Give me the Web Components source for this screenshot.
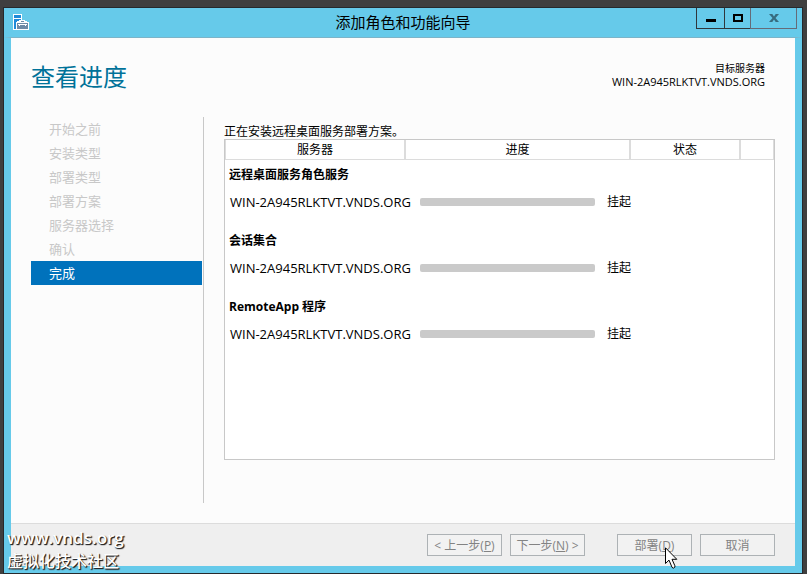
<!DOCTYPE html>
<html lang="zh-CN">
<head>
<meta charset="utf-8">
<meta name="viewport" content="width=device-width, initial-scale=1">
<title>添加角色和功能向导</title>
<style>
  body {
    margin: 0;
    font-family: "Open Sans", "Noto Sans CJK SC", sans-serif;
    font-size: 12px;
    color: #000;
    background-color: #3f3f3f;
  }
</style>
</head>
<body>
<wizard-window titlename="添加角色和功能向导">
  <wizard-header slot="header" titlename="查看进度" label="目标服务器" server="WIN-2A945RLKTVT.VNDS.ORG"></wizard-header>

  <wizard-steps slot="steps">
    <wizard-step>开始之前</wizard-step>
    <wizard-step>安装类型</wizard-step>
    <wizard-step>部署类型</wizard-step>
    <wizard-step>部署方案</wizard-step>
    <wizard-step>服务器选择</wizard-step>
    <wizard-step>确认</wizard-step>
    <wizard-step current>完成</wizard-step>
  </wizard-steps>

  <deploy-progress>正在安装远程桌面服务部署方案。</deploy-progress>

  <wizard-actions slot="actions">
    <wizard-button>&lt; 上一步(<u>P</u>)</wizard-button>
    <wizard-button>下一步(<u>N</u>) &gt;</wizard-button>
    <wizard-button slot="finish" pointed>部署(<u>D</u>)</wizard-button>
    <wizard-button slot="finish">取消</wizard-button>
  </wizard-actions>
</wizard-window>
<site-mark url="www.vnds.org" name="虚拟化技术社区"></site-mark>

<script>
class BaseElement extends HTMLElement {
  constructor() {
    super();
    this.attachShadow({ mode: 'open' });
  }

  connectedCallback() {
    const template = document.createElement('template');
    template.innerHTML = `${this.getStyle()}${this.getTemplate()}`;
    this.shadowRoot.replaceChildren(template.content.cloneNode(true));
  }
}

class WizardWindow extends BaseElement {
  getTemplate() {
    return `
      <div class="title-bar">
        <svg class="app-icon" viewBox="0 0 16 16" width="16" height="16" shape-rendering="crispEdges">
          <path fill="#fff" d="M0 0h9v6h3v1h2v1h2v8H0z"/>
          <path fill="#1f8ad8" d="M1 1h7v3H1zM1 5h7v1H6v1H4v1H3v7H1z"/>
          <path fill="#6f8ba6" d="M8 7h3v1H8zM4 9h11v6H4z"/>
          <path fill="#fff" d="M5 10h9v1H5zM6 11h1v1H6zM12 11h1v1h-1z"/>
          <path fill="#66caea" d="M9 0h7v6H9zM13 6h3v1h-3z"/>
        </svg>
        <h1>${this.getAttribute('titlename')}</h1>
        <div class="controls">
          <button aria-label="最小化"><svg viewBox="0 0 10 10" width="10" height="10"><path d="M0 6h10v3H0z"/></svg></button>
          <button class="maximize" aria-label="最大化"><svg viewBox="0 0 10 8" width="10" height="8"><path fill-rule="evenodd" d="M0 0h10v8H0zM2 2v4h6V2z"/></svg></button>
          <button class="close" aria-label="关闭"><svg viewBox="0 0 10 8" width="10" height="8"><path d="M0 0h3.3L5 2.4 6.700 0H10L6.500 4 10 8H6.700L5 5.600 3.300 8H0L3.500 4z"/></svg></button>
        </div>
      </div>
      <main>
        <slot name="header"></slot>
        <div class="content">
          <slot name="steps"></slot>
          <slot></slot>
        </div>
        <slot name="actions"></slot>
      </main>
    `;
  }

  getStyle() {
    return `
    <style>
      :host {
        min-height: 100vh;
        padding: 7px 4px 0 3px;
        box-sizing: border-box;
        display: flex;
        flex-direction: column;
        --frame-color: #66caea;
      }

      .title-bar {
        height: 29px;
        padding: 0 5px;
        display: grid;
        grid-template-columns: 1fr auto 1fr;
        align-items: start;
        border: 1px solid #26292c;
        border-bottom: none;
        background-color: var(--frame-color);
      }

      .app-icon {
        margin: 6px 4px 0;
      }

      h1 {
        margin: 0;
        font-size: 15px;
        font-weight: normal;
        line-height: 28px;
      }

      .controls {
        display: flex;
        justify-self: end;
      }

      button {
        width: 29px;
        height: 21px;
        margin: 0 0 0 -1px;
        padding: 0;
        display: flex;
        align-items: center;
        justify-content: center;
        border: 1px solid #30373c;
        border-top: none;
        background: none;
      }

      .maximize {
        width: 27px;
      }

      .close {
        width: 47px;
        border-color: #656b78;
        fill: #376b7f;
      }

      main {
        flex: 1;
        display: flex;
        flex-direction: column;
        border: 7px solid var(--frame-color);
        border-top: 1px solid #7cb4c8;
        background-color: #fcfcfc;
        outline: 1px solid #26292c;
        clip-path: inset(0 -1px -1px -1px);
        margin: 0 1px 1px;
      }

      .content {
        flex: 1;
        padding: 0 20px;
        display: flex;
      }
    </style>
    `;
  }
}

class WizardHeader extends BaseElement {
  getTemplate() {
    return `
      <h2>${this.getAttribute('titlename')}</h2>
      <div class="target">
        <div class="label">${this.getAttribute('label')}</div>
        <div class="server">${this.getAttribute('server')}</div>
      </div>
    `;
  }

  getStyle() {
    return `
    <style>
      :host {
        height: 79px;
        padding: 0 30px 0 20px;
        display: flex;
        justify-content: space-between;
      }

      h2 {
        margin: 21px 0 0;
        font-size: 24px;
        font-weight: normal;
        line-height: 36px;
        color: #007299;
      }

      .target {
        margin-top: 23px;
        line-height: 14px;
        text-align: right;
      }

      .label {
        font-family: "Noto Sans CJK SC", sans-serif;
        font-size: 10px;
      }

      .server {
        font-size: 11px;
      }
    </style>
    `;
  }
}

class WizardSteps extends BaseElement {
  getTemplate() {
    return `<nav><slot></slot></nav>`;
  }

  getStyle() {
    return `
    <style>
      :host {
        width: 171px;
        margin-bottom: 20px;
        padding-right: 1px;
        flex: none;
        border-right: 1px solid #c8c8c8;
      }
    </style>
    `;
  }
}

class WizardStep extends BaseElement {
  getTemplate() {
    return `<a href="#"><slot></slot></a>`;
  }

  getStyle() {
    return `
    <style>
      :host {
        display: block;
        color: #c8c8c8;
      }

      :host([current]) {
        color: #fff;
        background-color: #0072bc;
      }

      a {
        padding-left: 18px;
        display: block;
        font-size: 13px;
        line-height: 24px;
        color: inherit;
        text-decoration: none;
      }
    </style>
    `;
  }
}

class DeployProgress extends BaseElement {
  getRows() {
    const server = 'WIN-2A945RLKTVT.VNDS.ORG';
    const groups = ['远程桌面服务角色服务', '会话集合', 'RemoteApp 程序'];
    return groups.map((name) => `
      <tbody>
        <tr class="group"><th colspan="4" scope="rowgroup">${name}</th></tr>
        <tr class="server">
          <td>${server}</td>
          <td colspan="3">
            <div class="state">
              <progress value="0" max="100" aria-label="${name}"></progress>
              <span>挂起</span>
            </div>
          </td>
        </tr>
      </tbody>
    `).join('');
  }

  getTemplate() {
    return `
      <p><slot></slot></p>
      <div class="list">
        <table>
          <colgroup><col class="name"><col class="bar"><col class="status"><col></colgroup>
          <thead>
            <tr><th>服务器</th><th>进度</th><th>状态</th><th></th></tr>
          </thead>
          ${this.getRows()}
        </table>
      </div>
    `;
  }

  getStyle() {
    return `
    <style>
      :host {
        flex: 1;
        margin: 7px 0 63px 20px;
        display: flex;
        flex-direction: column;
      }

      p {
        margin: 0;
        line-height: 15px;
      }

      .list {
        flex: 1;
        border: 1px solid #c8c8c8;
        background-color: #fff;
      }

      table {
        width: 100%;
        table-layout: fixed;
        border-collapse: separate;
        border-spacing: 0;
      }

      .name { width: 181px; }
      .bar { width: 225px; }
      .status { width: 110px; }

      th, td {
        padding: 0;
        line-height: 18px;
        white-space: nowrap;
      }

      thead th {
        padding-top: 1px;
        font-weight: normal;
        border: 1px solid #dcdcdc;
        border-width: 0 2px 1px 0;
      }

      thead th:first-child {
        border-left-width: 1px;
      }

      thead th:last-child {
        border-right-width: 1px;
      }

      .group th {
        height: 30px;
        padding-left: 4px;
        text-align: left;
      }

      .server td {
        height: 24px;
        padding-bottom: 12px;
      }

      .server td:first-child {
        padding-left: 5px;
        font-size: 13px;
      }

      .state {
        padding-left: 14px;
        display: flex;
        align-items: center;
        gap: 12px;
      }

      progress {
        width: 175px;
        height: 8px;
        appearance: none;
        border: none;
        border-radius: 2px;
        overflow: hidden;
        background-color: #cacaca;
      }

      progress::-webkit-progress-bar {
        background-color: #cacaca;
      }
    </style>
    `;
  }
}

class WizardActions extends BaseElement {
  getTemplate() {
    return `
      <div><slot></slot></div>
      <div><slot name="finish"></slot></div>
    `;
  }

  getStyle() {
    return `
    <style>
      :host {
        padding: 10px 20px;
        display: flex;
        justify-content: flex-end;
        gap: 32px;
        border-top: 1px solid #dcdcdc;
        background-color: #efefef;
      }

      div {
        display: flex;
        gap: 8px;
      }
    </style>
    `;
  }
}

class WizardButton extends BaseElement {
  getTemplate() {
    const pointer = `
      <svg viewBox="0 0 13 22" width="13" height="22" aria-hidden="true">
        <path fill="#fff" stroke="#000" d="M.5.800v15.700l3.500-3.400 3 7.200 1.300.900 1.600-1.100v-1.300L7 12.300h4.800z"/>
      </svg>`;
    return `
      <button disabled><slot></slot></button>
      ${this.hasAttribute('pointed') ? pointer : ''}
    `;
  }

  getStyle() {
    return `
    <style>
      :host {
        position: relative;
        display: block;
      }

      button {
        width: 75px;
        height: 22px;
        padding: 1px 0 0;
        font: inherit;
        line-height: 19px;
        white-space: nowrap;
        color: #838383;
        border: 1px solid #adb2b5;
        background-color: #f2f2f2;
      }

      /* mouse pointer resting on the button */
      svg {
        position: absolute;
        top: 13px;
        left: 48px;
      }
    </style>
    `;
  }
}

class SiteMark extends BaseElement {
  getTemplate() {
    return `
      <div class="url">${this.getAttribute('url')}</div>
      <div class="name">${this.getAttribute('name')}</div>
    `;
  }

  getStyle() {
    return `
    <style>
      :host {
        position: absolute;
        bottom: 2px;
        left: 7px;
        font-weight: 500;
        color: #fff;
        text-shadow: 1px 1px 1px #222, 1px 1px 1px #444;
        pointer-events: none;
      }

      .url {
        font-size: 17px;
        font-weight: 600;
        line-height: 24px;
      }

      .name {
        font-size: 16px;
        line-height: 22px;
      }
    </style>
    `;
  }
}

customElements.define('wizard-window', WizardWindow);
customElements.define('wizard-header', WizardHeader);
customElements.define('wizard-steps', WizardSteps);
customElements.define('wizard-step', WizardStep);
customElements.define('deploy-progress', DeployProgress);
customElements.define('wizard-actions', WizardActions);
customElements.define('wizard-button', WizardButton);
customElements.define('site-mark', SiteMark);
</script>
</body>
</html>
